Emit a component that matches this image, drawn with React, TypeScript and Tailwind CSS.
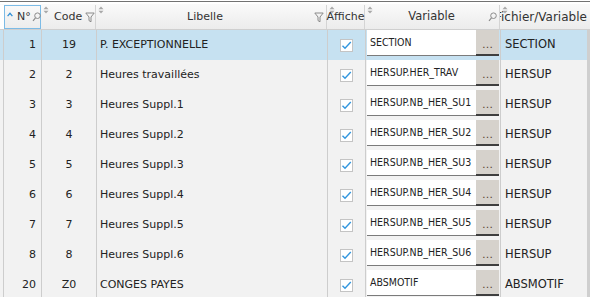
import React from "react";

type Row = { no: number; code: string; libelle: string; variable: string; fichier: string };

const ROWS: Row[] = [
  { no: 1, code: "19", libelle: "P. EXCEPTIONNELLE", variable: "SECTION", fichier: "SECTION" },
  { no: 2, code: "2", libelle: "Heures travaillées", variable: "HERSUP.HER_TRAV", fichier: "HERSUP" },
  { no: 3, code: "3", libelle: "Heures Suppl.1", variable: "HERSUP.NB_HER_SU1", fichier: "HERSUP" },
  { no: 4, code: "4", libelle: "Heures Suppl.2", variable: "HERSUP.NB_HER_SU2", fichier: "HERSUP" },
  { no: 5, code: "5", libelle: "Heures Suppl.3", variable: "HERSUP.NB_HER_SU3", fichier: "HERSUP" },
  { no: 6, code: "6", libelle: "Heures Suppl.4", variable: "HERSUP.NB_HER_SU4", fichier: "HERSUP" },
  { no: 7, code: "7", libelle: "Heures Suppl.5", variable: "HERSUP.NB_HER_SU5", fichier: "HERSUP" },
  { no: 8, code: "8", libelle: "Heures Suppl.6", variable: "HERSUP.NB_HER_SU6", fichier: "HERSUP" },
  { no: 20, code: "Z0", libelle: "CONGES PAYES", variable: "ABSMOTIF", fichier: "ABSMOTIF" },
];

const FONT = "font-['DejaVu_Sans','Verdana',sans-serif]";

function SortIcon() {
  return (
    <svg width="6" height="8" viewBox="0 0 6 8" className="absolute left-[2px] top-[1px]">
      <path d="M3 0.5 L5.5 3.2 H0.5 Z" fill="#a8a8a8" />
      <path d="M3 7.5 L5.5 4.8 H0.5 Z" fill="#a8a8a8" />
    </svg>
  );
}

function SearchIcon() {
  return (
    <svg width="9" height="10" viewBox="0 0 9 10" className="shrink-0">
      <circle cx="5.5" cy="3.7" r="2.8" fill="none" stroke="#8a8a8a" strokeWidth="1" />
      <path d="M3.5 5.9 L1 8.8" stroke="#8a8a8a" strokeWidth="1.2" />
    </svg>
  );
}

function FilterIcon() {
  return (
    <svg width="10" height="11" viewBox="0 0 10 11" className="shrink-0">
      <path d="M0.8 1 H9.2 L6 5 V9.8 L4 8.6 V5 Z" fill="none" stroke="#8a8a8a" strokeWidth="1" strokeLinejoin="round" />
    </svg>
  );
}

function Check() {
  return (
    <div className="w-[13px] h-[13px] bg-white border border-[#c4c4c4] flex items-center justify-center">
      <svg width="11" height="9" viewBox="0 0 11 9">
        <path d="M1.5 4.8 L4 7.2 L9.8 1" fill="none" stroke="#3196de" strokeWidth="1.4" />
      </svg>
    </div>
  );
}

export default function App() {
  return (
    <div className={`w-[590px] h-[297px] overflow-hidden bg-white text-[#222] ${FONT}`}>
      <div className="h-[1px]" />
      <div className="h-[1px] bg-[#727272]" />
      <div className="h-[2px] bg-white" />

      {/* header */}
      <div className="flex h-[26px] pt-[1px] text-[11px] text-[#333] bg-linear-to-b from-[#fafafa] to-[#ececec] border-b border-[#cfcfcf]">
        <div className="w-[4px] shrink-0 bg-white" />
        <div className="relative w-[37px] shrink-0 flex items-center border border-[#7cbbe6] pl-[2px]">
          <svg width="6" height="5" viewBox="0 0 6 5" className="shrink-0 mb-[5px]">
            <path d="M0.6 4.2 L3 1.3 L5.4 4.2" fill="none" stroke="#2e8fd6" strokeWidth="1.2" />
          </svg>
          <span className="ml-[4px]">N°</span>
          <span className="ml-[1px]"><SearchIcon /></span>
        </div>
        <div className="relative w-[55px] shrink-0 flex items-center border-r border-[#d4d4d4]">
          <SortIcon />
          <span className="ml-[13px]">Code</span>
          <span className="ml-[3px]"><FilterIcon /></span>
        </div>
        <div className="relative w-[231px] shrink-0 flex items-center border-r border-[#d4d4d4]">
          <SortIcon />
          <span className="flex-1 text-center">Libelle</span>
          <span className="mr-[2px]"><FilterIcon /></span>
        </div>
        <div className="relative w-[38px] shrink-0 flex items-center justify-center border-r border-[#d4d4d4]">
          <SortIcon />
          <span className="whitespace-nowrap">Affiche</span>
        </div>
        <div className="relative w-[135px] shrink-0 flex items-center border-r border-[#d4d4d4]">
          <SortIcon />
          <span className="flex-1 text-center pl-[10px] text-[11.5px]">Variable</span>
          <span className="mr-[2px]"><SearchIcon /></span>
        </div>
        <div className="relative flex-1 flex items-center overflow-hidden">
          <span className="whitespace-nowrap -ml-[5px] text-[12px]">Fichier/Variable</span>
          <SortIcon />
        </div>
      </div>

      {/* body */}
      {ROWS.map((r, i) => {
        const selected = i === 0;
        const bg = selected ? "bg-[#c6e1f1]" : "bg-[#f2f2f2]";
        return (
          <div key={r.no} className={`flex h-[30px] text-[11px] ${bg}`}>
            <div className="w-[3px] shrink-0" />
            <div className="w-[38px] shrink-0 flex items-center justify-end pr-[5px] border-l border-[#cdcdcd]">
              {r.no}
            </div>
            <div className="w-[55px] shrink-0 flex items-center justify-center border-l border-[#cdcdcd]">
              {r.code}
            </div>
            <div className="w-[231px] shrink-0 flex items-center pl-[3px] border-l border-[#cdcdcd]">
              {r.libelle}
            </div>
            <div className="w-[38px] shrink-0 flex items-center justify-center border-l border-[#cdcdcd]">
              <Check />
            </div>
            <div className="w-[135px] shrink-0 flex items-start pl-[1px] border-l border-[#cdcdcd]">
              <div className="w-[109px] h-[26px] bg-white border-b border-[#7b7b7b] flex items-center pl-[3px] text-[10.5px] font-['DejaVu_Sans_Condensed','DejaVu_Sans',sans-serif] [font-stretch:condensed] whitespace-nowrap overflow-hidden">
                {r.variable}
              </div>
              <div className="w-[23px] h-[26px] bg-[#d6d2cc] border-b-2 border-[#3f3f3f] flex items-end justify-center pb-[4px] text-[11px] text-[#5a4632] leading-none">
                …
              </div>
            </div>
            <div className="flex-1 flex items-center pl-[4px] text-[11.5px] border-l border-[#cdcdcd] whitespace-nowrap">
              {r.fichier}
            </div>
            <div className="w-[3px] shrink-0 bg-[#cfcfcf]" />
          </div>
        );
      })}
    </div>
  );
}
